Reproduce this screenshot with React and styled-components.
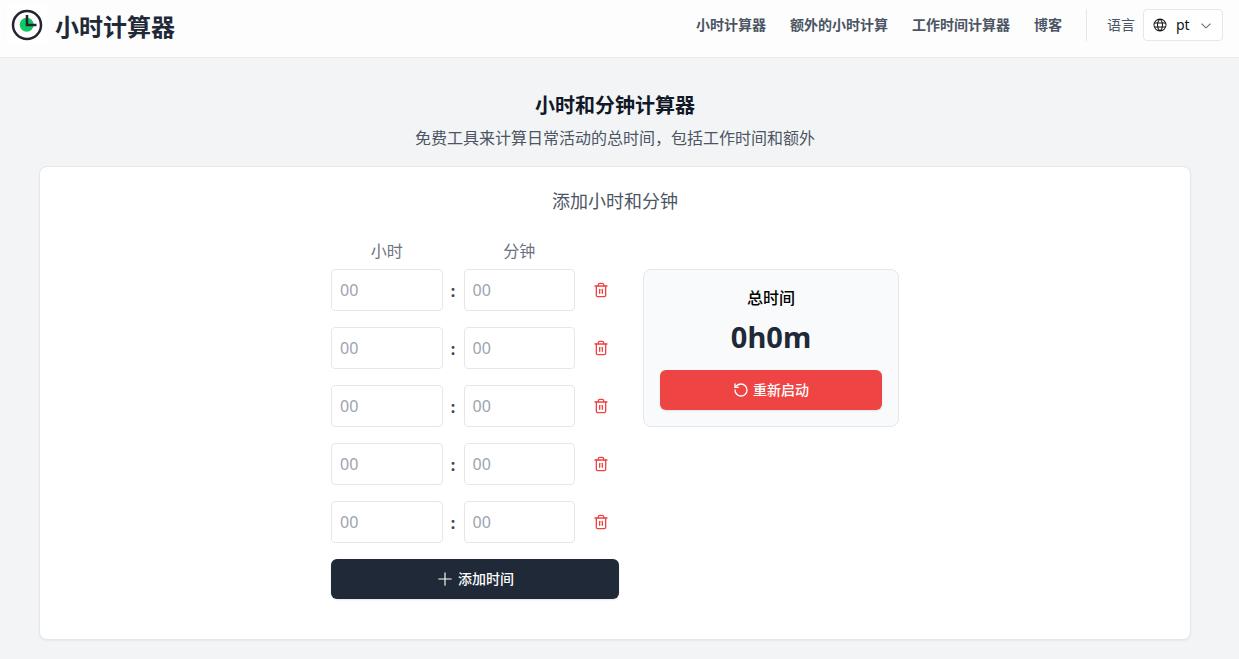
import React, { useState } from "react";
import styled, { createGlobalStyle } from "styled-components";
import { RotateCcw, Trash2 } from "lucide-react";
import { RxChevronDown } from "react-icons/rx";
import { PiGlobe, PiPlus } from "react-icons/pi";

const links = [
  { id: 1, url: "#horas", text: "小时计算器" },
  { id: 2, url: "#extras", text: "额外的小时计算" },
  { id: 3, url: "#trabalho", text: "工作时间计算器" },
  { id: 4, url: "#blog", text: "博客" },
];

const emptyRow = (id) => ({ id, hours: "", minutes: "" });
const initialRows = () => [1, 2, 3, 4, 5].map(emptyRow);

const Logo = () => (
  <svg width="40" height="40" viewBox="0 0 40 40" aria-hidden="true">
    <rect width="40" height="40" fill="#fff" />
    <circle cx="19.7" cy="19.7" r="7" fill="#0fc763" />
    <circle cx="20" cy="20" r="14" fill="none" stroke="#25232f" strokeWidth="2.5" />
    <path d="M20 10v10h9.5" fill="none" stroke="#25232f" strokeWidth="2.5" />
  </svg>
);

const Navbar = () => {
  const [lang, setLang] = useState("pt");
  return (
    <Header>
      <Brand href="#">
        <Logo />
        <span>小时计算器</span>
      </Brand>
      <Nav>
        <NavList>
          {links.map((link) => {
            const { id, url, text } = link;
            return (
              <li key={id}>
                <NavLink href={url}>{text}</NavLink>
              </li>
            );
          })}
        </NavList>
        <Language>
          <label htmlFor="language">语言</label>
          <SelectBox>
            <PiGlobe size={16} />
            <select
              id="language"
              value={lang}
              onChange={(e) => setLang(e.target.value)}
            >
              <option value="pt">pt</option>
              <option value="en">en</option>
              <option value="es">es</option>
            </select>
            <RxChevronDown className="chevron" size={16} />
          </SelectBox>
        </Language>
      </Nav>
    </Header>
  );
};

const App = () => {
  const [rows, setRows] = useState(initialRows);

  const updateRow = (id, field, value) => {
    setRows(rows.map((row) => (row.id === id ? { ...row, [field]: value } : row)));
  };
  const removeRow = (id) => setRows(rows.filter((row) => row.id !== id));
  const addRow = () => setRows([...rows, emptyRow(Date.now())]);

  const total = rows.reduce(
    (sum, row) => sum + Number(row.hours) * 60 + Number(row.minutes),
    0
  );

  return (
    <>
      <GlobalStyle />
      <Navbar />
      <Main>
        <Title>小时和分钟计算器</Title>
        <Subtitle>免费工具来计算日常活动的总时间，包括工作时间和额外</Subtitle>
        <Card>
          <CardTitle>添加小时和分钟</CardTitle>
          <Columns>
            <Times>
              <Row>
                <ColumnLabel id="hours">小时</ColumnLabel>
                <ColumnLabel id="minutes" $column={3}>
                  分钟
                </ColumnLabel>
              </Row>
              <Rows>
                {rows.map((row) => (
                  <Row key={row.id}>
                    <TimeInput
                      type="number"
                      placeholder="00"
                      aria-labelledby="hours"
                      value={row.hours}
                      onChange={(e) => updateRow(row.id, "hours", e.target.value)}
                    />
                    <Colon>:</Colon>
                    <TimeInput
                      type="number"
                      placeholder="00"
                      aria-labelledby="minutes"
                      value={row.minutes}
                      onChange={(e) => updateRow(row.id, "minutes", e.target.value)}
                    />
                    <DeleteButton aria-label="删除" onClick={() => removeRow(row.id)}>
                      <Trash2 size={16} />
                    </DeleteButton>
                  </Row>
                ))}
                <Button onClick={addRow}>
                  <PiPlus size={18} />
                  添加时间
                </Button>
              </Rows>
            </Times>
            <Total>
              <h3>总时间</h3>
              <output>
                {Math.floor(total / 60)}h{total % 60}m
              </output>
              <Button $danger onClick={() => setRows(initialRows())}>
                <RotateCcw size={16} strokeWidth={2} />
                重新启动
              </Button>
            </Total>
          </Columns>
        </Card>
      </Main>
    </>
  );
};

const GlobalStyle = createGlobalStyle`
  * {
    box-sizing: border-box;
    margin: 0;
    padding: 0;
  }
  body {
    background: #f3f4f6;
    color: #000;
    font-family: "Noto Sans", "Noto Sans CJK SC", sans-serif;
    font-size: 16px;
    line-height: 24px;
  }
  button, input, select {
    font: inherit;
    color: inherit;
  }
`;

const Header = styled.header`
  display: flex;
  justify-content: space-between;
  align-items: flex-start;
  padding: 5px 16px 8px 7px;
  background: #fdfdfd;
  border-bottom: 1px solid #e5e7eb;
`;

const Brand = styled.a`
  display: flex;
  align-items: flex-start;
  gap: 8px;
  color: #1f2937;
  font-size: 24px;
  font-weight: 700;
  line-height: 44px;
  text-decoration: none;
`;

const Nav = styled.nav`
  display: flex;
  align-items: center;
  gap: 24px;
  padding-top: 4px;
  color: #4b5563;
  font-size: 14px;
  line-height: 20px;
`;

const NavList = styled.ul`
  display: flex;
  gap: 24px;
  list-style: none;
`;

const NavLink = styled.a`
  color: inherit;
  font-weight: 600;
  text-decoration: none;
`;

const Language = styled.div`
  display: flex;
  align-items: center;
  gap: 8px;
  padding-left: 20px;
  border-left: 1px solid #e5e7eb;
`;

const SelectBox = styled.div`
  display: flex;
  align-items: center;
  height: 32px;
  padding: 0 8px;
  gap: 8px;
  background: #fff;
  border: 1px solid #e5e7eb;
  border-radius: 4px;
  color: #111;
  svg {
    flex-shrink: 0;
  }
  select {
    width: 14px;
    appearance: none;
    background: none;
    border: 0;
    outline: 0;
  }
  .chevron {
    color: #666;
  }
`;

const Main = styled.main`
  padding: 32px 25px 19px 16px;
  text-align: center;
`;

const Title = styled.h1`
  color: #111827;
  font-size: 20px;
  line-height: 32px;
`;

const Subtitle = styled.p`
  margin: 4px 0 16px;
  color: #4b5563;
`;

const Card = styled.section`
  max-width: 1152px;
  margin: 0 auto;
  padding: 20px 16px 40px;
  background: #fff;
  border: 1px solid #e5e7eb;
  border-radius: 8px;
  box-shadow: 0 1px 2px rgba(0, 0, 0, 0.05);
`;

const CardTitle = styled.h2`
  margin-bottom: 24px;
  color: #4b5563;
  font-size: 18px;
  font-weight: 400;
  line-height: 28px;
`;

const Columns = styled.div`
  display: flex;
  flex-wrap: wrap;
  justify-content: center;
  align-items: flex-start;
  gap: 24px;
`;

const Times = styled.div`
  width: 288px;
`;

const Rows = styled.div`
  display: flex;
  flex-direction: column;
  gap: 16px;
  margin-top: 6px;
`;

const Row = styled.div`
  display: grid;
  grid-template-columns: 1fr 21px 1fr 44px;
  align-items: center;
`;

const ColumnLabel = styled.span`
  grid-column: ${(props) => props.$column || 1};
  color: #6b7280;
`;

const TimeInput = styled.input`
  width: 100%;
  height: 42px;
  padding: 0 8px;
  background: #fff;
  border: 1px solid #e5e7eb;
  border-radius: 4px;
  appearance: textfield;
  &::placeholder {
    color: #9ca3af;
  }
`;

const Colon = styled.span`
  padding-top: 2px;
  color: #374151;
  font-weight: 700;
`;

const DeleteButton = styled.button`
  display: grid;
  place-items: center;
  justify-self: center;
  width: 32px;
  height: 32px;
  padding-left: 8px;
  background: none;
  border: 0;
  color: #ef4444;
  cursor: pointer;
`;

const Button = styled.button`
  display: flex;
  justify-content: center;
  align-items: center;
  gap: 4px;
  width: 100%;
  height: 40px;
  background: ${(props) => (props.$danger ? "#ef4444" : "#1f2937")};
  border: 0;
  border-radius: 6px;
  box-shadow: 0 1px 2px rgba(0, 0, 0, 0.1);
  color: #fff;
  font-size: 14px;
  font-weight: 500;
  cursor: pointer;
`;

const Total = styled.aside`
  width: 256px;
  margin-top: 30px;
  padding: 16px;
  background: #f9fafb;
  border: 1px solid #e5e7eb;
  border-radius: 8px;
  h3 {
    font-size: 16px;
    font-weight: 500;
  }
  output {
    display: block;
    margin: 8px 0 14px;
    color: #1f2937;
    font-size: 29px;
    font-weight: 700;
    line-height: 38px;
  }
`;

export default App;
